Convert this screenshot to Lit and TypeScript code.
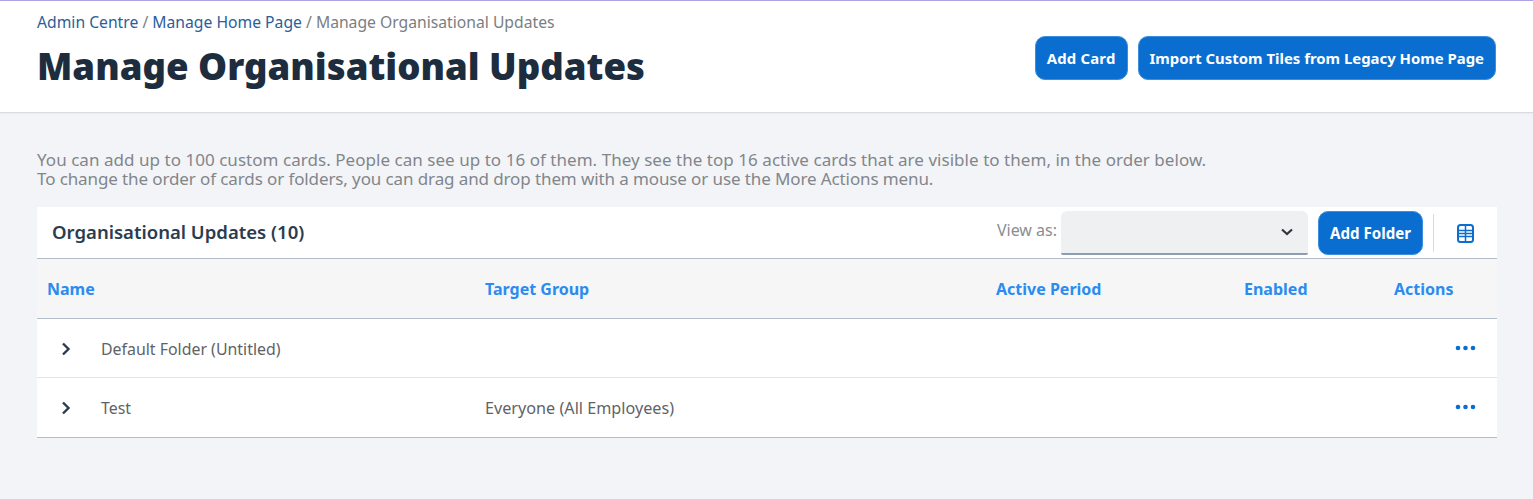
import { LitElement, html, css } from "lit";
import { customElement } from "lit/decorators.js";

@customElement("app-root")
export class AppRoot extends LitElement {
  static styles = css`
    :host {
      display: block;
      width: 1533px;
      height: 499px;
      overflow: hidden;
      background: #f3f4f7;
      font-family: "Noto Sans", "Open Sans", sans-serif;
      color: #6a6d70;
    }
    .header {
      box-sizing: border-box;
      background: #fff;
      border-top: 1px solid #aaa4e6;
      border-bottom: 1px solid #d9dce1;
      box-shadow: 0 1px 1px rgba(0, 0, 0, 0.03);
      height: 113px;
      padding: 0 37px;
      display: flex;
      justify-content: space-between;
    }
    .crumbs {
      font-size: 15.700px;
      line-height: 19px;
      margin-top: 12px;
      color: #7b7e82;
    }
    .crumbs a {
      color: #2a6099;
    }
    h1 {
      margin: 9px 0 0;
      font-size: 36.600px;
      line-height: 50px;
      font-weight: 900;
      color: #1d2d3e;
    }
    .actions {
      display: flex;
      gap: 10px;
      margin-top: 35px;
    }
    .btn {
      height: 44px;
      box-sizing: border-box;
      background: #0a6ed1;
      color: #fff;
      border-radius: 10px;
      border: 1px solid #3d8fdd;
      font-size: 14.900px;
      font-weight: 700;
      display: flex;
      align-items: center;
      padding: 0 11px;
      white-space: nowrap;
    }
    .spaced {
      letter-spacing: 0.200px;
    }
    .intro {
      margin: 37px 0 0 37px;
      font-size: 17px;
      line-height: 19px;
      color: #82868b;
      white-space: nowrap;
    }
    .tight {
      letter-spacing: -0.110px;
    }
    .wide {
      letter-spacing: 0.040px;
    }
    .panel {
      margin: 19px 36px 0 37px;
      background: #fff;
      border-bottom: 1px solid #b4bdcb;
    }
    .toolbar {
      height: 52px;
      box-sizing: border-box;
      border-bottom: 1px solid #b4bdcb;
      display: flex;
      align-items: center;
      padding: 1px 23px 0 15px;
    }
    .title {
      font-size: 18.550px;
      font-weight: 600;
      color: #2b3c4f;
      flex: 1;
      margin-top: -4px;
    }
    .viewas {
      font-size: 16px;
      color: #8a8d91;
      margin-right: 4px;
      margin-top: -7px;
    }
    .select {
      width: 247px;
      height: 44px;
      box-sizing: border-box;
      background: #eff0f2;
      border-radius: 6px 6px 2px 2px;
      border-bottom: 2px solid #8e9cb0;
      display: flex;
      align-items: center;
      justify-content: flex-end;
      padding-right: 14px;
    }
    .toolbar .btn {
      margin-left: 10px;
      height: 44px;
      padding: 0 11px;
      font-size: 15.100px;
    }
    .divider {
      width: 1px;
      height: 38px;
      background: #d8dbe0;
      margin: 0 23px 0 10px;
    }
    .row {
      display: grid;
      grid-template-columns: 438px 511px 248px 150px 113px;
      align-items: center;
    }
    .head {
      height: 60px;
      box-sizing: border-box;
      background: #f6f6f7;
      border-bottom: 1px solid #b4bdcb;
      color: #2a8cf0;
      font-size: 16px;
      font-weight: 700;
    }
    .head > div {
      padding-left: 10px;
    }
    .body {
      height: 58px;
      box-sizing: border-box;
      padding-top: 2px;
      font-size: 15.900px;
      color: #5f6367;
    }
    .body + .body {
      height: 60px;
      padding-top: 0;
      border-top: 1px solid #e5e5e5;
    }
    .body .name {
      display: flex;
      align-items: center;
      padding-left: 24px;
    }
    .body .name svg {
      margin-right: 30px;
    }
    .body .target {
      padding-left: 10px;
      font-size: 16.200px;
    }
    .dots {
      grid-column: 5;
      display: flex;
      justify-content: flex-end;
      padding-right: 21px;
      margin-top: -2px;
    }
  `;

  chevron() {
    return html`<svg width="10" height="14" viewBox="0 0 10 14">
      <path d="M2 1.500 7.500 7 2 12.500" fill="none" stroke="#2b3c4f" stroke-width="2.400" />
    </svg>`;
  }

  dots() {
    return html`<svg width="21" height="6" viewBox="0 0 21 6">
      <circle cx="3" cy="3" r="2.300" fill="#0a6ed1" />
      <circle cx="10.500" cy="3" r="2.300" fill="#0a6ed1" />
      <circle cx="18" cy="3" r="2.300" fill="#0a6ed1" />
    </svg>`;
  }

  render() {
    return html`
      <div class="header">
        <div>
          <div class="crumbs">
            <a>Admin Centre</a> / <a>Manage Home Page</a> / Manage Organisational Updates
          </div>
          <h1>Manage Organisational Updates</h1>
        </div>
        <div class="actions">
          <div class="btn spaced">Add Card</div>
          <div class="btn">Import Custom Tiles from Legacy Home Page</div>
        </div>
      </div>
      <div class="intro">
        <span class="wide">You can add up to 100 custom cards. People can see up to 16 of them. They see the top 16 active cards that are visible to them, in the order below.</span><br />
        <span class="tight">To change the order of cards or folders, you can drag and drop them with a mouse or use the More Actions menu.</span>
      </div>
      <div class="panel">
        <div class="toolbar">
          <div class="title">Organisational Updates (10)</div>
          <div class="viewas">View as:</div>
          <div class="select">
            <svg width="14" height="10" viewBox="0 0 14 10">
              <path d="M2 2.500 7 7l5-4.500" fill="none" stroke="#32363a" stroke-width="2.200" />
            </svg>
          </div>
          <div class="btn">Add Folder</div>
          <div class="divider"></div>
          <svg width="17" height="19" viewBox="0 0 17 19">
            <rect x="1" y="1" width="15" height="17" rx="2.500" fill="none" stroke="#0a6ed1" stroke-width="2" />
            <path d="M1 6.500h15M1 9.500h15M1 12.500h15M8.500 2v15" stroke="#0a6ed1" stroke-width="1.500" fill="none" />
          </svg>
        </div>
        <div class="row head">
          <div>Name</div>
          <div>Target Group</div>
          <div>Active Period</div>
          <div>Enabled</div>
          <div>Actions</div>
        </div>
        <div class="row body">
          <div class="name">${this.chevron()}<span>Default Folder (Untitled)</span></div>
          <div class="target"></div>
          <div class="dots">${this.dots()}</div>
        </div>
        <div class="row body">
          <div class="name">${this.chevron()}<span>Test</span></div>
          <div class="target">Everyone (All Employees)</div>
          <div class="dots">${this.dots()}</div>
        </div>
      </div>
    `;
  }
}
